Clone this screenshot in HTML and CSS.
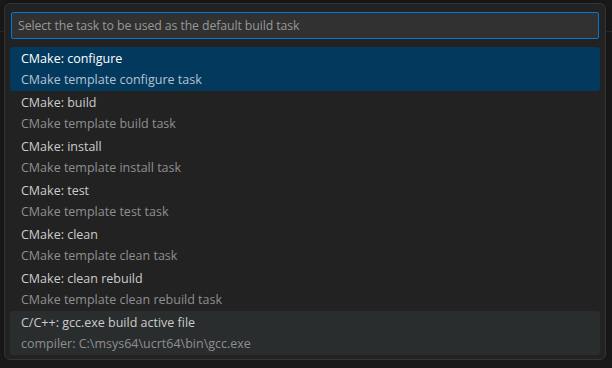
FILE: index.html
```html
<!DOCTYPE html>
<html lang="en">
<head>
    <meta charset="UTF-8">
    <meta name="viewport" content="width=device-width, initial-scale=1.0">
    <title>Select default build task</title>
    <link rel="stylesheet" href="styles.css">
</head>
<body>

    <div class="editor-line"></div>

    <div class="quick-input">
        <input class="filter" type="text" placeholder="Select the task to be used as the default build task">

        <div class="task-list">
            <div class="task selected">
                <div class="task-label">CMake: configure</div>
                <div class="task-detail">CMake template configure task</div>
            </div>
            <div class="task">
                <div class="task-label">CMake: build</div>
                <div class="task-detail">CMake template build task</div>
            </div>
            <div class="task">
                <div class="task-label">CMake: install</div>
                <div class="task-detail">CMake template install task</div>
            </div>
            <div class="task">
                <div class="task-label">CMake: test</div>
                <div class="task-detail">CMake template test task</div>
            </div>
            <div class="task">
                <div class="task-label">CMake: clean</div>
                <div class="task-detail">CMake template clean task</div>
            </div>
            <div class="task">
                <div class="task-label">CMake: clean rebuild</div>
                <div class="task-detail">CMake template clean rebuild task</div>
            </div>
            <div class="task hovered">
                <div class="task-label">C/C++: gcc.exe build active file</div>
                <div class="task-detail">compiler: C:\msys64\ucrt64\bin\gcc.exe</div>
            </div>
        </div>
    </div>

</body>
</html>
```

FILE: styles.css
```css
body {
    margin: 0;
    background-color: #1a1a1a;
    font-family: "Open Sans", "Noto Sans", sans-serif;
    font-size: 12.5px;
    color: #cccccc;
    position: relative;
}
/* linia redaktora pod oknem */
.editor-line {
    position: absolute;
    left: 0;
    right: 0;
    top: 31px;
    height: 1px;
    background-color: #2b2b2b;
}
.quick-input {
    position: relative;
    margin: 3px 6px 0 4px;
    padding: 8px 6px 4px;
    background-color: #222222;
    border: 1px solid #343434;
    border-radius: 6px;
    box-shadow: 0 0 8px rgba(0, 0, 0, 0.36);
}
.filter {
    display: block;
    box-sizing: border-box;
    width: 100%;
    height: 27px;
    margin: 0;
    padding: 0 6px;
    background-color: #313131;
    border: 1px solid #0078d4;
    border-radius: 2px;
    color: #cccccc;
    font-family: inherit;
    font-size: 12.3px;
    letter-spacing: -0.1px;
    outline: none;
}
.filter::placeholder {
    color: #989898;
}
.task-list {
    margin: 8px -1px 0;
}
.task {
    height: 44px;
    padding: 0 11px;
    border-radius: 3px;
    display: flex;
    flex-direction: column;
    justify-content: center;
}
.task-label {
    line-height: 21px;
    color: #cccccc;
}
.task-detail {
    line-height: 21px;
    color: #8f8f8f;
}
.selected {
    background-color: #04395e;
}
.selected .task-label {
    color: #ffffff;
}
.selected .task-detail {
    color: #b4c3cf;
}
.hovered {
    background-color: #2a2d2e;
}
```
